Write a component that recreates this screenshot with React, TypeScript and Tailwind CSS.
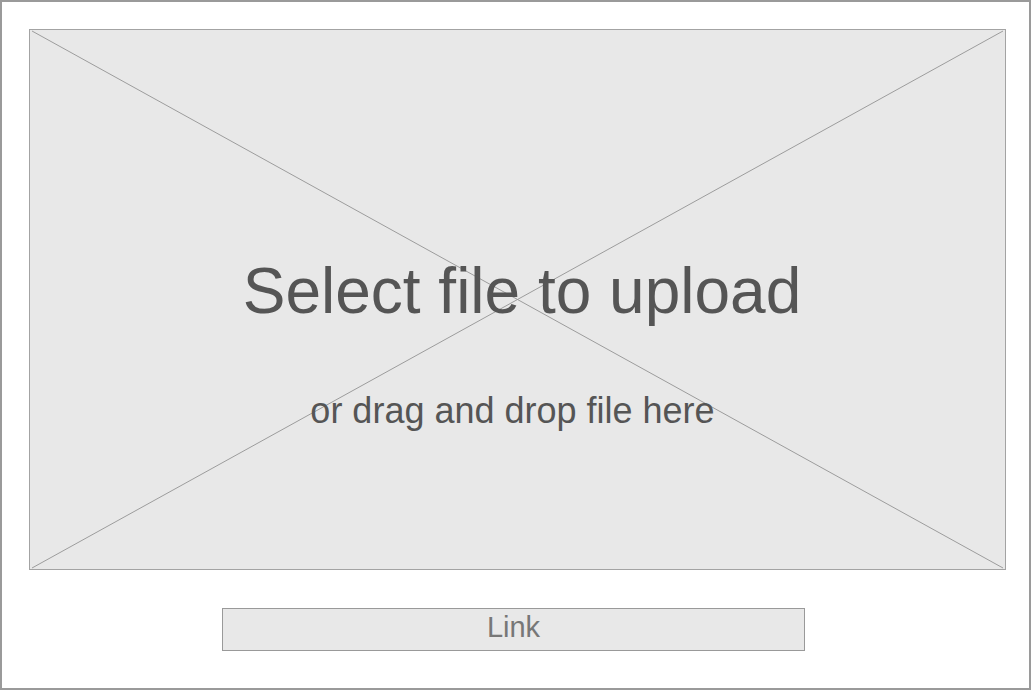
import React from 'react';

const font = { fontFamily: '"Liberation Sans", Arial, sans-serif' };

function CrossLines() {
  // placeholder "X" drawn across the drop zone
  return (
    <svg
      className="absolute inset-0 h-full w-full pointer-events-none"
      viewBox="0 0 975 539"
      preserveAspectRatio="none"
    >
      <line x1="2" y1="1" x2="973" y2="538" stroke="#9c9c9c" strokeWidth="1" />
      <line x1="973" y1="1" x2="2" y2="538" stroke="#9c9c9c" strokeWidth="1" />
    </svg>
  );
}

export default function App() {
  return (
    <div
      className="w-[1031px] h-[690px] border-2 border-[#9a9a9a] bg-white pl-[27px] pt-[27px] flex flex-col"
      style={font}
    >
      <div className="relative w-[977px] h-[541px] shrink-0 border border-[#a3a3a3] bg-[#e8e8e8] flex flex-col items-center pt-[229px]">
        <CrossLines />
        <h1 className="relative text-[64px] leading-none text-[#555555] ml-[9px]">
          Select file to upload
        </h1>
        <p className="relative mt-[70px] text-[36px] leading-none text-[#555555] -ml-[10px]">
          or drag and drop file here
        </p>
      </div>
      <button
        type="button"
        className="mt-[38px] ml-[193px] w-[583px] h-[43px] shrink-0 border border-[#999999] bg-[#e8e8e8] pt-[4px] text-[29px] leading-none text-[#777777] flex justify-center items-start"
      >
        Link
      </button>
    </div>
  );
}
